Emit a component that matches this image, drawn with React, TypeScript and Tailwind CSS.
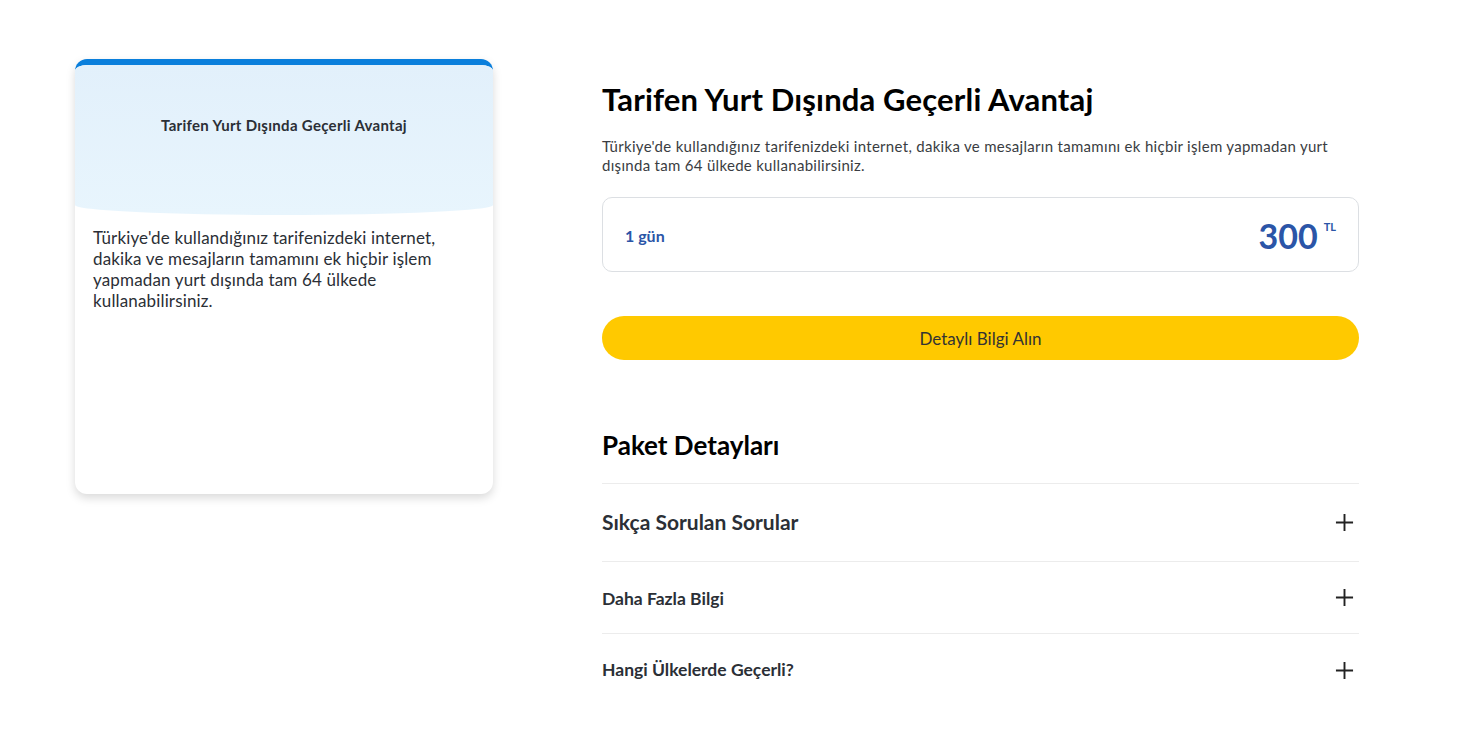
import React from "react";

const Plus = () => (
  <svg width="19" height="19" viewBox="0 0 20 20" fill="none" stroke="#222" strokeWidth="2">
    <path d="M10 1v18M1 10h18" />
  </svg>
);

export default function App() {
  const font = { fontFamily: "Lato, 'Noto Sans', sans-serif" };
  return (
    <div className="min-h-[753px] bg-white" style={font}>
      <div className="flex pl-[75px] pt-[59px]">
        <div className="w-[418px] h-[435px] shrink-0 rounded-[12px] bg-white border-t-[6px] border-[#0a7fdc] shadow-[0_4px_10px_rgba(0,0,0,0.15)] overflow-hidden">
          <div className="h-[150px] bg-gradient-to-b from-[#e2f0fb] to-[#e8f5fd] rounded-b-[50%_10px] flex items-start justify-center pt-[49px]">
            <span className="text-[15px] tracking-[0.3px] font-bold text-[#2b2f36]">Tarifen Yurt Dışında Geçerli Avantaj</span>
          </div>
          <p className="px-[18px] pt-[12px] text-[17px] tracking-[0.15px] leading-[21px] text-[#2b2f36]">
            Türkiye'de kullandığınız tarifenizdeki internet, dakika ve mesajların tamamını ek hiçbir işlem yapmadan yurt dışında tam 64 ülkede kullanabilirsiniz.
          </p>
        </div>
        <div className="ml-[109px] w-[757px] pt-[20px]">
          <h1 className="text-[31px] tracking-[0.15px] leading-[40px] font-bold text-black">Tarifen Yurt Dışında Geçerli Avantaj</h1>
          <p className="mt-[18px] text-[15px] tracking-[0.3px] leading-[19px] text-[#3a3d42]">
            Türkiye'de kullandığınız tarifenizdeki internet, dakika ve mesajların tamamını ek hiçbir işlem yapmadan yurt dışında tam 64 ülkede kullanabilirsiniz.
          </p>
          <div className="mt-[22px] h-[75px] border border-[#dcdfe3] rounded-[10px] flex items-center justify-between pl-[22px] pr-[22px]">
            <span className="text-[16px] font-bold text-[#2b55a7] mt-[2px]">1 gün</span>
            <span className="flex items-start text-[#2b55a7] mt-[2px]">
              <span className="text-[34px] font-bold leading-none">300</span>
              <span className="ml-[6px] text-[11px] font-bold leading-none mt-[2px]">TL</span>
            </span>
          </div>
          <button className="mt-[44px] w-full h-[44px] rounded-full bg-[#ffc900] text-[17px] text-[#333] pt-[2px]">Detaylı Bilgi Alın</button>
          <h2 className="mt-[69px] text-[26px] leading-[32px] font-bold text-black">Paket Detayları</h2>
          <div className="mt-[22px] border-t border-[#ececec]">
            <div className="h-[78px] flex items-center justify-between border-b border-[#ececec]">
              <span className="text-[21px] font-bold text-[#2b2f36] -mt-[2px]">Sıkça Sorulan Sorular</span>
              <span className="mr-[5px]"><Plus /></span>
            </div>
            <div className="h-[72px] flex items-center justify-between border-b border-[#ececec]">
              <span className="text-[17.5px] font-bold text-[#2b2f36] mt-[3px]">Daha Fazla Bilgi</span>
              <span className="mr-[5px]"><Plus /></span>
            </div>
            <div className="h-[72px] flex items-center justify-between">
              <span className="text-[17.5px] font-bold text-[#2b2f36]">Hangi Ülkelerde Geçerli?</span>
              <span className="mr-[5px]"><Plus /></span>
            </div>
          </div>
        </div>
      </div>
    </div>
  );
}
